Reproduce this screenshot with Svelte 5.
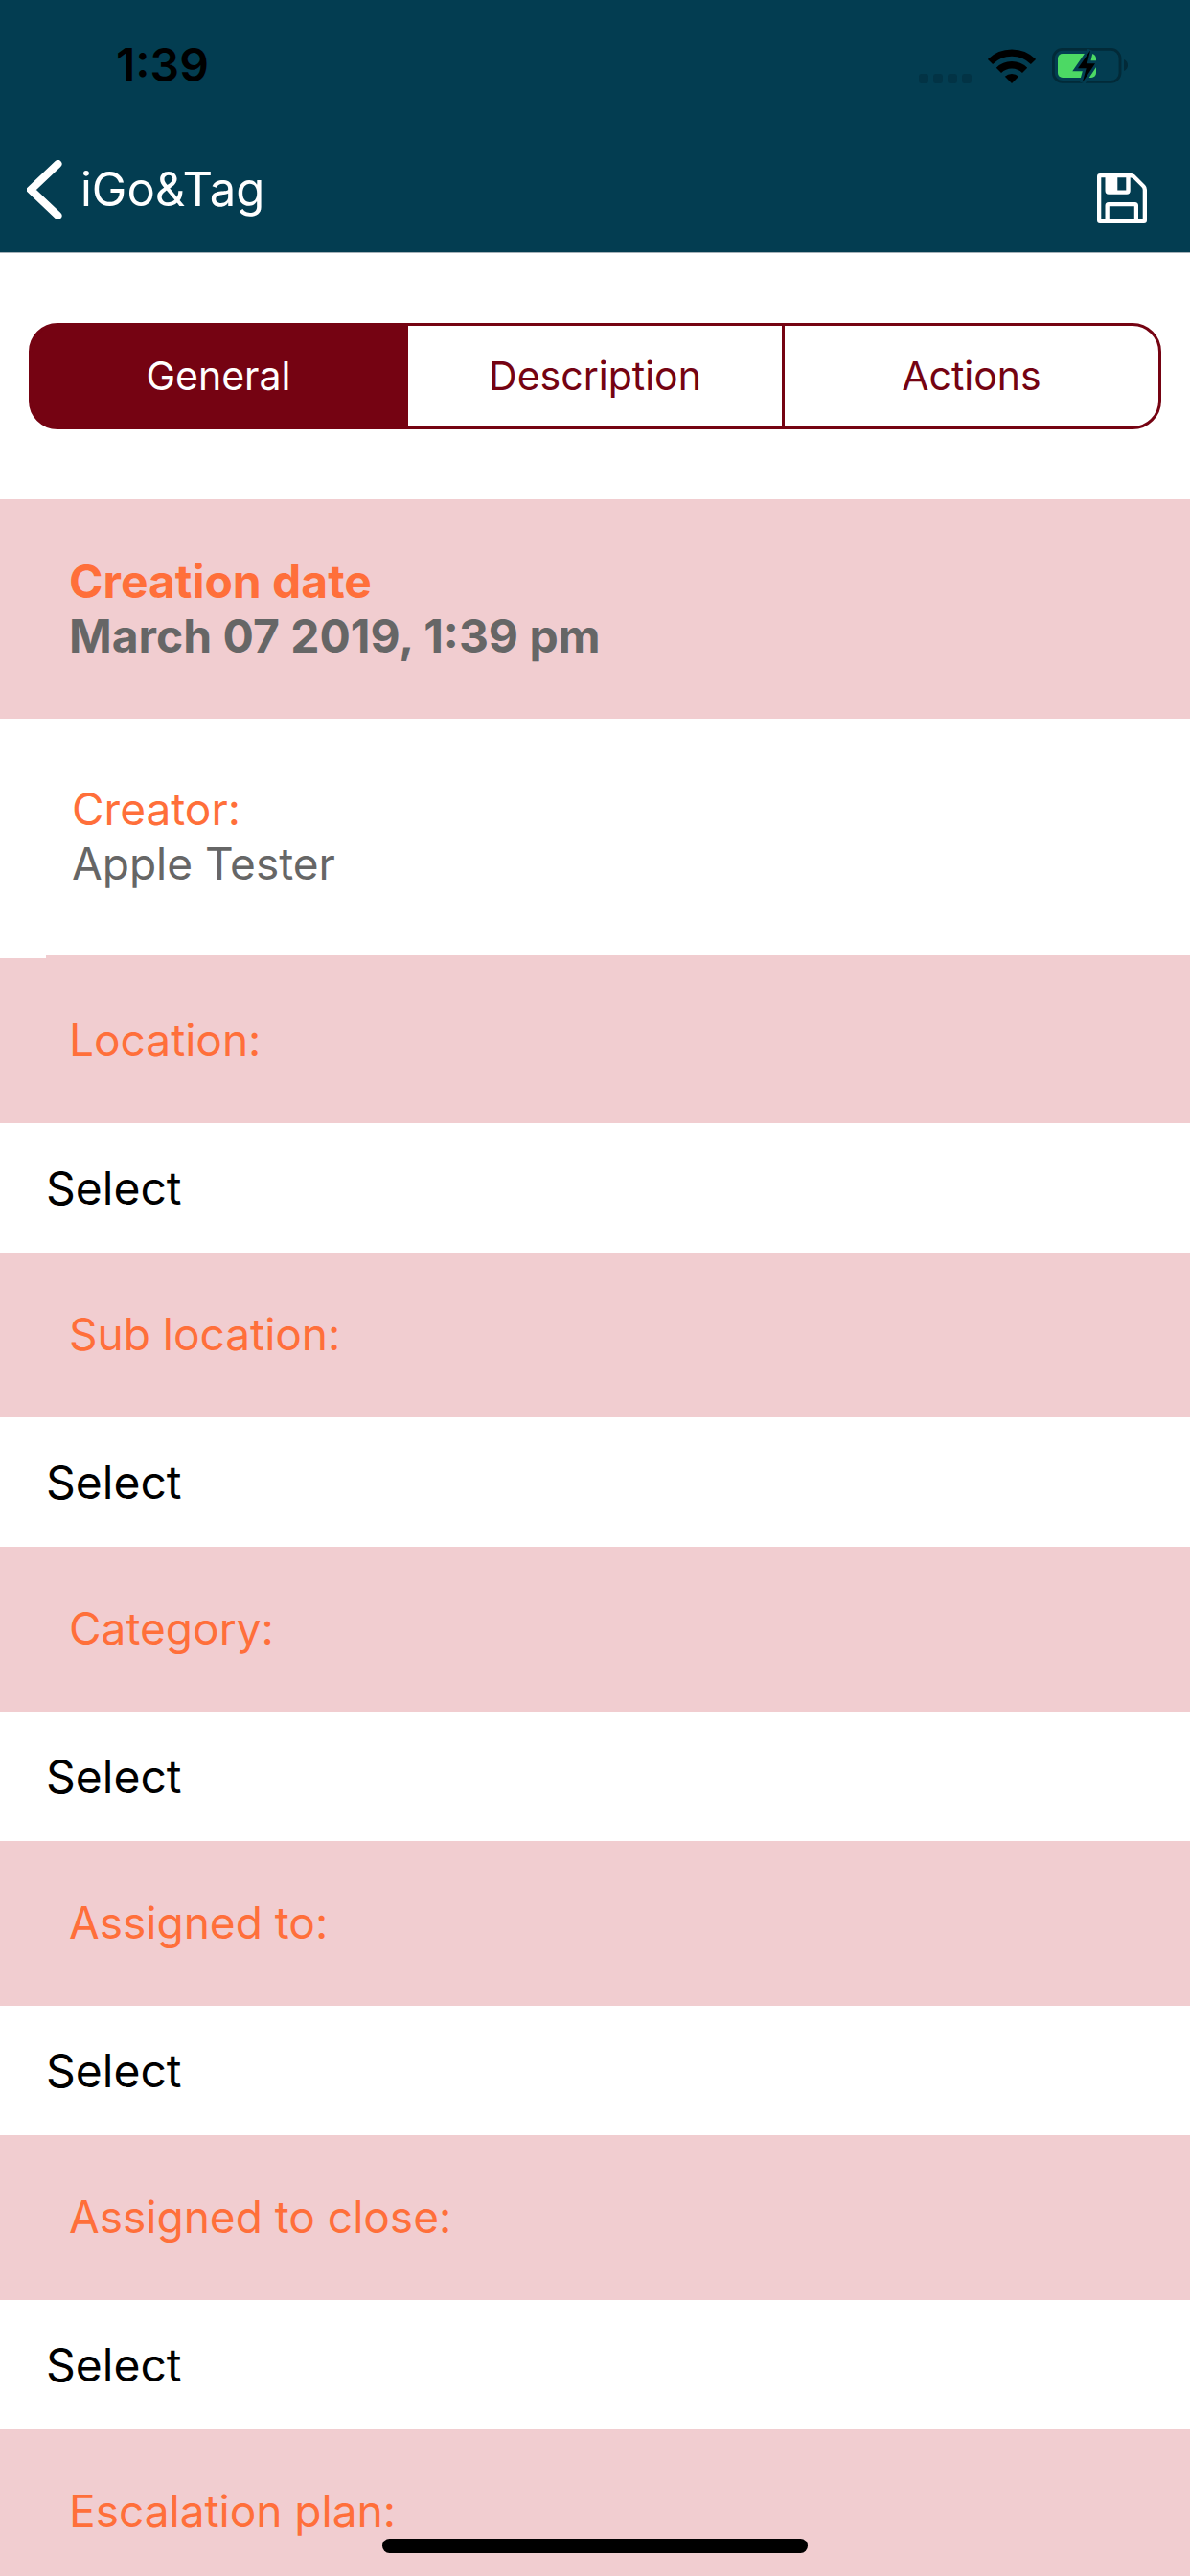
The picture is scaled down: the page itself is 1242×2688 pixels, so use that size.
<script lang="ts">
  type Field = { id: string; label: string };

  const tabs = ['General', 'Description', 'Actions'];

  const fields: Field[] = [
    { id: 'location', label: 'Location:' },
    { id: 'sub-location', label: 'Sub location:' },
    { id: 'category', label: 'Category:' },
    { id: 'assigned-to', label: 'Assigned to:' },
    { id: 'assigned-to-close', label: 'Assigned to close:' },
    { id: 'escalation-plan', label: 'Escalation plan:' },
  ];

  let activeTab = $state('General');
</script>

<div class="screen">
  <header>
    <div class="status-bar">
      <span class="time">1:39</span>
      <div class="indicators">
        <svg class="signal" width="55" height="10" viewBox="0 0 55 10" aria-hidden="true">
          {#each [0, 15, 30, 45] as x}
            <rect {x} width="10" height="10" rx="3" />
          {/each}
        </svg>
        <svg width="50" height="36" viewBox="0 0 50 36" aria-hidden="true">
          <g fill="none" stroke="#000" stroke-width="7.4">
            <path d="M2.5 13.5A31.8 31.8 0 0 1 47.5 13.5" />
            <path d="M11.4 22.4A19.3 19.3 0 0 1 38.6 22.4" />
          </g>
          <path d="M25 36 17.8 28.8A10.4 10.4 0 0 1 32.2 28.8Z" />
        </svg>
        <svg width="80" height="38" viewBox="0 0 80 38" aria-hidden="true">
          <rect x="1.4" y="2.4" width="69.6" height="34" rx="9.5" fill="none" stroke="#022a38" stroke-width="2.8" />
          <path d="M75 13c5.3 1.8 5.3 10.2 0 12Z" fill="#022a38" />
          <rect x="6" y="7" width="40" height="25" rx="5" fill="#4cd964" />
          <path class="bolt" d="M40 3.5 27 22.3H35.7L31.7 37 45 17.3H36.7Z" />
        </svg>
      </div>
    </div>
    <nav>
      <a class="back" href="#back">
        <svg width="37" height="62" viewBox="0 0 37 62" aria-hidden="true">
          <path d="M32.5 4 4 31 32.5 58" fill="none" stroke="#fff" stroke-width="8" stroke-linecap="round" />
        </svg>
        iGo&amp;Tag
      </a>
      <button class="save" aria-label="Save">
        <svg width="52" height="52" viewBox="0 0 52 52" aria-hidden="true">
          <path
            fill="#fff"
            fill-rule="evenodd"
            d="M3 0H36Q38 0 39.5 1.5L50 12Q52 14 52 17V49Q52 52 49 52H3Q0 52 0 49V3Q0 0 3 0ZM4.3 4.3V47.5H8.5V33.5Q8.5 30 12 30H39.5Q43 30 43 33.5V47.5H47.7V17Q47.7 15.5 46.5 14.3L38 5.8Q36.5 4.3 34.7 4.3V18Q34.7 21.7 31 21.7H12Q8.5 21.7 8.5 18V4.3ZM21.3 4.3V17.5H30.3V4.3ZM12.8 34.3V47.5H38.8V34.3Z"
          />
        </svg>
      </button>
    </nav>
  </header>

  <main>
    <div class="tabs" role="tablist">
      {#each tabs as tab}
        <button
          role="tab"
          aria-selected={activeTab === tab}
          class:active={activeTab === tab}
          onclick={() => (activeTab = tab)}
        >
          {tab}
        </button>
      {/each}
    </div>

    <div class="info created">
      <span class="caption">Creation date</span>
      <span>March 07 2019, 1:39 pm</span>
    </div>
    <div class="info creator">
      <span class="caption">Creator:</span>
      <span>Apple Tester</span>
    </div>

    {#each fields as field}
      <label for={field.id}>{field.label}</label>
      <select id={field.id}>
        <option>Select</option>
      </select>
    {/each}
  </main>

  <div class="home-indicator"></div>
</div>

<style>
  :global(body) {
    margin: 0;
    background: #fff;
  }

  .screen {
    --navy: #033d51;
    --maroon: #750312;
    --pink: #f1cdd0;
    --orange: #ff6f3a;
    position: relative;
    display: flex;
    flex-direction: column;
    height: 100vh;
    overflow: hidden;
    font-family: Inter, 'Liberation Sans', sans-serif;
    font-size: 46px;
    line-height: 57px;
  }

  button,
  select {
    appearance: none;
    margin: 0;
    padding: 0;
    border: 0;
    background: none;
    font: inherit;
  }

  header {
    flex-shrink: 0;
    background: var(--navy);
  }

  .status-bar,
  nav {
    display: flex;
    justify-content: space-between;
    align-items: center;
    box-sizing: border-box;
    height: 132px;
  }

  .status-bar {
    padding: 3px 64px 0 121px;
  }

  .time {
    font-size: 48px;
    font-weight: 600;
  }

  .indicators {
    display: flex;
    align-items: flex-end;
    gap: 17px;
  }

  .signal {
    fill: #023345;
  }

  .bolt {
    fill: #000;
    stroke: var(--navy);
    stroke-width: 6px;
    paint-order: stroke;
  }

  nav {
    padding: 0 45px 0 28px;
    border-bottom: 1px solid #a5b1b8;
  }

  .back {
    display: flex;
    align-items: center;
    gap: 19px;
    color: #fff;
    font-size: 49px;
    text-decoration: none;
  }

  .save {
    padding-top: 18px;
  }

  .save svg {
    display: block;
  }

  main {
    flex: 1;
    min-height: 0;
    overflow-y: auto;
    scrollbar-width: none;
  }

  .tabs {
    display: flex;
    margin: 73px 30px;
  }

  .tabs button {
    flex: 1;
    height: 111px;
    border: 3px solid var(--maroon);
    color: var(--maroon);
    font-size: 41px;
  }

  .tabs button + button {
    margin-left: -3px;
  }

  .tabs button:first-child {
    border-radius: 30px 0 0 30px;
  }

  .tabs button:last-child {
    border-radius: 0 30px 30px 0;
  }

  .tabs button.active {
    background: var(--maroon);
    color: #fff;
  }

  .info {
    display: flex;
    flex-direction: column;
    color: #666;
  }

  .created {
    padding: 57px 72px 58px;
    background: var(--pink);
    font-size: 48px;
    font-weight: 700;
  }

  .creator {
    padding: 66px 75px 67px;
  }

  .creator::after {
    content: '';
    height: 3px;
    margin: 67px -75px -67px -27px;
    background: var(--pink);
  }

  .caption {
    color: var(--orange);
  }

  label {
    display: flex;
    align-items: center;
    box-sizing: border-box;
    height: 172px;
    padding: 0 72px 2px;
    background: var(--pink);
    color: var(--orange);
  }

  select {
    display: block;
    width: 100%;
    height: 135px;
    padding: 0 48px;
    color: #000;
    font-size: 48px;
  }

  .home-indicator {
    position: absolute;
    bottom: 24px;
    left: 50%;
    width: 444px;
    height: 15px;
    border-radius: 8px;
    background: #000;
    transform: translateX(-50%);
  }
</style>
